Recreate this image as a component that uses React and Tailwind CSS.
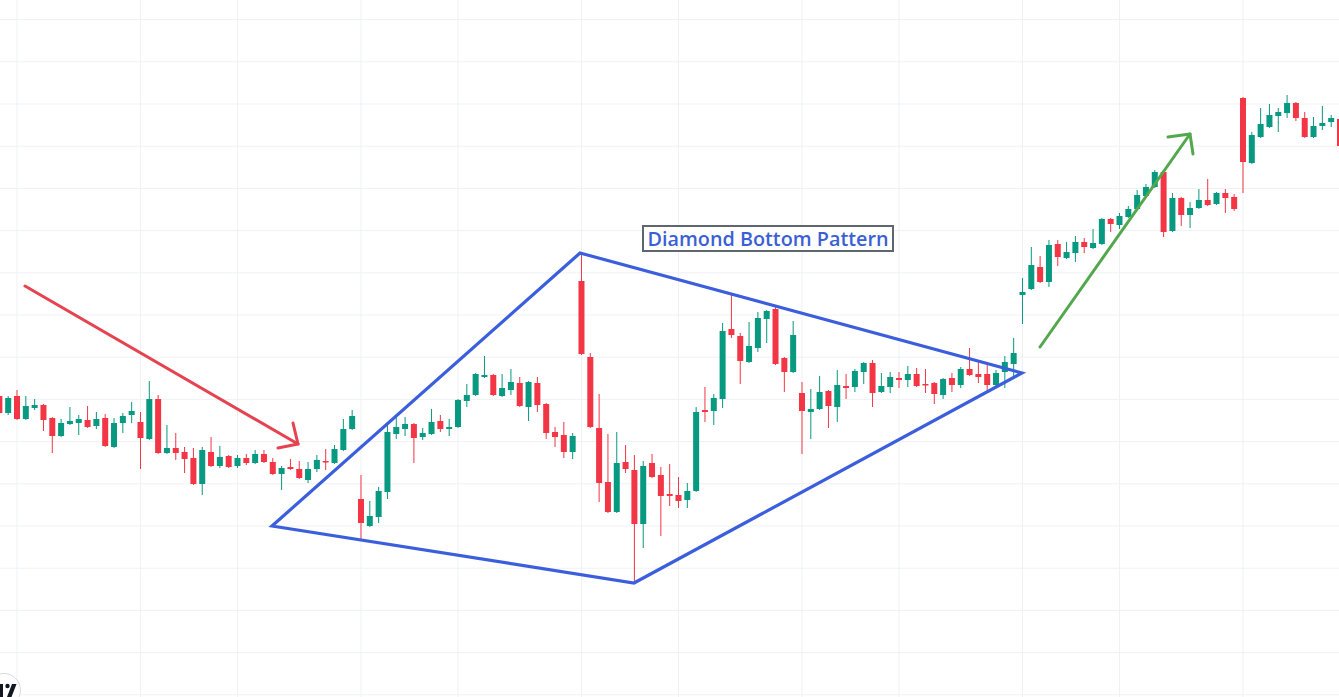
// Diamond bottom chart, drawn on a fixed 1339x697 canvas
const UP = '#089981';
const DOWN = '#f23645';

// [color, high, bodyTop, bodyBottom, low] in pixel rows, one per bar
const BARS = [
  ['r', 395, 396, 413, 414], ['g', 396, 398, 413, 415], ['r', 390, 396, 419, 420], ['g', 396, 406, 419, 420],
  ['g', 399, 405, 408, 410], ['r', 404, 405, 420, 431], ['r', 417, 418, 436, 453], ['g', 419, 423, 436, 437],
  ['g', 407, 421, 424, 425], ['g', 415, 419, 423, 435], ['r', 406, 420, 427, 428], ['g', 412, 419, 426, 429],
  ['r', 414, 418, 446, 447], ['g', 418, 423, 447, 448], ['g', 413, 416, 423, 433], ['g', 402, 411, 415, 423],
  ['r', 412, 422, 438, 469], ['g', 381, 399, 439, 440], ['r', 395, 399, 453, 454], ['g', 425, 448, 453, 454],
  ['r', 433, 448, 453, 460], ['r', 447, 452, 459, 473], ['r', 448, 458, 484, 485], ['g', 447, 450, 484, 495],
  ['r', 437, 452, 466, 467], ['g', 446, 457, 466, 468], ['r', 455, 456, 467, 468], ['g', 455, 458, 466, 468],
  ['r', 454, 458, 463, 465], ['g', 450, 454, 463, 464], ['r', 450, 454, 462, 463], ['r', 458, 462, 474, 475],
  ['g', 466, 468, 474, 490], ['r', 459, 467, 469, 470], ['r', 461, 469, 478, 479], ['g', 462, 469, 480, 483],
  ['g', 455, 460, 469, 472], ['r', 449, 461, 462, 470], ['g', 445, 449, 463, 464], ['g', 419, 429, 450, 451],
  ['g', 410, 416, 429, 430], ['r', 475, 499, 523, 540], ['g', 501, 516, 526, 527], ['g', 487, 491, 517, 523],
  ['g', 422, 432, 492, 499], ['g', 417, 427, 434, 439], ['g', 417, 424, 429, 436], ['r', 423, 424, 438, 463],
  ['g', 428, 433, 437, 440], ['g', 409, 422, 434, 435], ['r', 415, 421, 429, 432], ['g', 419, 427, 429, 436],
  ['g', 399, 400, 427, 428], ['g', 384, 395, 401, 407], ['g', 373, 374, 395, 396], ['g', 356, 375, 377, 378],
  ['r', 374, 375, 395, 396], ['g', 374, 388, 396, 397], ['g', 369, 382, 390, 395], ['r', 377, 383, 406, 407],
  ['g', 381, 382, 407, 421], ['r', 377, 383, 405, 412], ['r', 403, 404, 433, 439], ['r', 427, 432, 437, 447],
  ['r', 422, 435, 452, 458], ['g', 433, 436, 452, 459], ['r', 253, 281, 354, 355], ['r', 353, 357, 427, 428],
  ['r', 394, 428, 483, 502], ['r', 434, 482, 512, 513], ['g', 432, 463, 512, 513], ['r', 445, 462, 469, 473],
  ['r', 455, 470, 524, 583], ['g', 461, 466, 524, 548], ['r', 454, 463, 477, 478], ['r', 467, 475, 496, 536],
  ['r', 464, 494, 496, 506], ['r', 477, 495, 501, 508], ['g', 483, 491, 500, 508], ['g', 407, 412, 491, 492],
  ['r', 387, 410, 412, 422], ['g', 394, 398, 411, 425], ['g', 323, 331, 399, 408], ['r', 293, 329, 335, 338],
  ['r', 333, 336, 361, 384], ['g', 322, 346, 362, 363], ['g', 312, 318, 348, 352], ['g', 310, 311, 319, 343],
  ['r', 307, 309, 364, 365], ['r', 357, 358, 372, 392], ['g', 321, 335, 372, 373], ['r', 382, 393, 411, 454],
  ['g', 389, 409, 412, 439], ['g', 376, 392, 409, 410], ['r', 390, 391, 406, 428], ['g', 370, 385, 407, 422],
  ['r', 374, 386, 388, 399], ['g', 369, 371, 387, 392], ['g', 362, 363, 372, 384], ['r', 360, 363, 393, 407],
  ['g', 373, 386, 392, 393], ['g', 372, 377, 387, 393], ['r', 372, 378, 380, 388], ['g', 366, 374, 380, 387],
  ['r', 368, 374, 386, 387], ['r', 369, 384, 385, 393], ['r', 382, 383, 394, 404], ['g', 378, 379, 395, 399],
  ['r', 373, 378, 385, 392], ['g', 367, 369, 385, 388], ['r', 348, 369, 375, 376], ['r', 362, 374, 377, 383],
  ['r', 365, 374, 385, 392], ['g', 370, 373, 385, 386], ['g', 356, 362, 372, 388], ['g', 338, 353, 364, 377],
  ['g', 278, 292, 295, 324], ['g', 247, 265, 289, 290], ['r', 256, 267, 282, 283], ['g', 240, 245, 282, 287],
  ['r', 240, 244, 257, 266], ['g', 242, 252, 258, 259], ['g', 236, 242, 253, 262], ['r', 238, 242, 247, 253],
  ['g', 229, 243, 248, 249], ['g', 218, 219, 244, 245], ['r', 218, 219, 224, 232], ['g', 213, 216, 225, 229],
  ['g', 206, 209, 217, 218], ['g', 190, 195, 209, 210], ['g', 184, 187, 196, 197], ['g', 170, 172, 187, 188],
  ['r', 171, 172, 232, 237], ['g', 193, 198, 231, 232], ['r', 197, 198, 215, 226], ['g', 202, 208, 215, 228],
  ['g', 189, 200, 208, 209], ['r', 179, 200, 205, 206], ['g', 192, 193, 204, 205], ['r', 189, 193, 198, 213],
  ['r', 194, 197, 209, 211], ['r', 97, 98, 162, 193], ['g', 132, 135, 163, 164], ['g', 108, 124, 137, 138],
  ['g', 104, 115, 127, 128], ['g', 108, 112, 116, 132], ['g', 95, 103, 113, 118], ['r', 102, 103, 118, 121],
  ['r', 112, 118, 137, 138], ['g', 117, 126, 137, 138], ['g', 106, 123, 126, 130], ['g', 115, 118, 122, 127],
  ['r', 118, 119, 146, 147],
];

const barX = (i) => -0.64 + 8.82 * i;

// vertical grid sits on every few bars (time labels)
const V_GRID = [2, 16, 27, 41, 52, 66, 77, 91, 102, 116, 127, 141];
const H_GRID = Array.from({ length: 17 }, (_, k) => 19.6 + 42.2 * k);

function Candles() {
  return (
    <g>
      {BARS.map(([c, hi, top, bot, lo], i) => {
        const x = barX(i);
        const fill = c === 'g' ? UP : DOWN;
        return (
          <g key={i}>
            <rect x={x - 0.5} y={hi} width={1} height={lo - hi} fill={fill} />
            <rect x={x - 3} y={top} width={6} height={Math.max(bot - top, 1.5)} fill={fill} />
          </g>
        );
      })}
    </g>
  );
}

function TvLogo() {
  return (
    <div className="absolute left-[-13px] top-[673px] w-[34px] h-[34px] rounded-full bg-white border border-[#d6d9e0]">
      <svg width="34" height="34" viewBox="0 0 34 34" className="absolute left-[-1px] top-[-1px]">
        <path d="M6 11h10v13h-4v-9H6z" fill="#131722" />
        <circle cx="20.5" cy="13" r="2.2" fill="#131722" />
        <path d="M25 11h4.5l-5 13H20z" fill="#131722" />
      </svg>
    </div>
  );
}

export default function App() {
  return (
    <div className="relative w-[1339px] h-[697px] bg-white overflow-hidden">
      <svg width="1339" height="697" viewBox="0 0 1339 697" className="block">
        {/* grid */}
        {H_GRID.map((y) => (
          <line key={'h' + y} x1="0" x2="1339" y1={y} y2={y} stroke="#eff1f4" strokeWidth="1" />
        ))}
        {V_GRID.map((i) => (
          <line key={'v' + i} x1={barX(i)} x2={barX(i)} y1="0" y2="697" stroke="#eff1f4" strokeWidth="1" />
        ))}

        <Candles />

        {/* diamond */}
        <path
          d="M272 526 L580 253 L1022 373 L634 583 Z"
          fill="none"
          stroke="#3b5fdc"
          strokeWidth="3.2"
          strokeLinejoin="miter"
        />

        {/* downtrend arrow */}
        <g stroke="#e4434f" strokeWidth="3" fill="none" strokeLinecap="round" strokeLinejoin="round">
          <path d="M25 286 L298 444" />
          <path d="M293 423 L298 444 L278 448" />
        </g>

        {/* breakout arrow */}
        <g stroke="#53a84e" strokeWidth="3" fill="none" strokeLinecap="round" strokeLinejoin="round">
          <path d="M1040 347 L1190 134" />
          <path d="M1168 137 L1190 134 L1193 154" />
        </g>
      </svg>

      <div className="absolute left-[642px] top-[225px] w-[252px] h-[27px] border-2 border-[#5f6670] bg-white flex items-center justify-center">
        <span className="font-['Open_Sans',sans-serif] font-semibold text-[19.8px] leading-none text-[#3b5fd4]">
          Diamond Bottom Pattern
        </span>
      </div>

      <TvLogo />
    </div>
  );
}
